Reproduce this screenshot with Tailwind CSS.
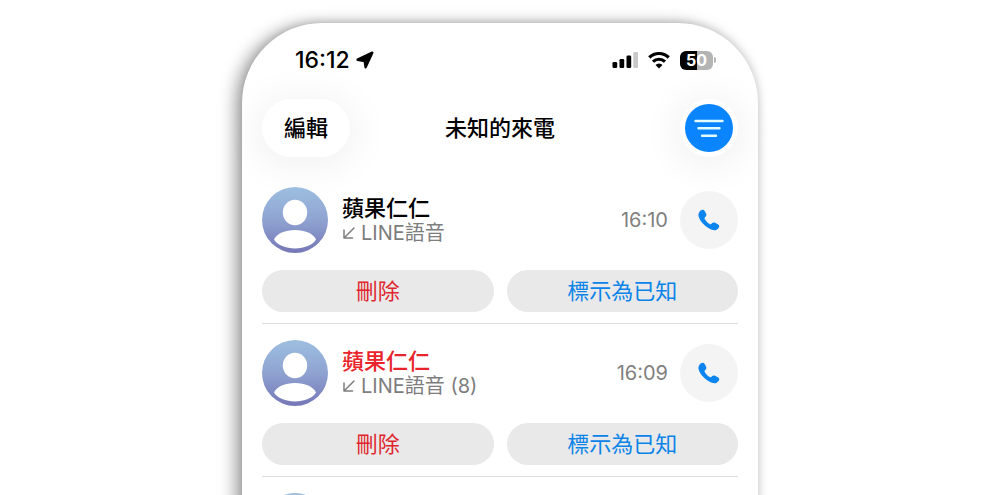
<!DOCTYPE html>
<html lang="zh-Hant">
<head>
    <meta charset="UTF-8">
    <meta name="viewport" content="width=device-width, initial-scale=1.0">
    <title>未知的來電</title>
    <script src="https://cdn.jsdelivr.net/npm/@tailwindcss/browser@4"></script>
</head>
<body class="bg-white h-screen overflow-hidden font-['Inter','Noto_Sans_CJK_TC',sans-serif] antialiased">
    <!-- Shared icons -->
    <svg class="absolute w-0 h-0" aria-hidden="true">
        <defs>
            <linearGradient id="avatar-bg" x1="0" y1="0" x2="0" y2="1">
                <stop offset="0" stop-color="#9dbfe0"/>
                <stop offset="0.5" stop-color="#8fa3d1"/>
                <stop offset="1" stop-color="#7577b6"/>
            </linearGradient>
            <symbol id="icon-avatar" viewBox="0 0 66 66">
                <circle cx="33" cy="33" r="33" fill="url(#avatar-bg)"/>
                <ellipse cx="33" cy="25.5" rx="12.2" ry="12.7" fill="#fff"/>
                <path fill="#fff" d="M12 52.5C15 46.500 23 43 33 43s18 3.500 21 9.500C51 58 42 61.500 33 61.500S15 58 12 52.500Z"/>
            </symbol>
            <symbol id="icon-incoming" viewBox="0 0 14 14">
                <path d="M12 2 2 12M2 4v8h8.500" fill="none" stroke="currentColor" stroke-width="1.500" stroke-linecap="round" stroke-linejoin="round"/>
            </symbol>
            <symbol id="icon-phone" viewBox="0 0 22 22">
                <path fill="currentColor" d="M1.200 3.200C2 1.800 3.300.7 4.500.7c.9 0 1.600.5 2.200 1.300l1.300 2.600c.6 1.100.5 2-.3 2.900l-.9 1c-.4.400-.4.900-.1 1.400 1.300 2.200 3.100 4 5.200 5.200.500.300 1 .2 1.400-.2l.9-.8c.9-.8 1.800-.9 2.900-.3l2.700 1.500c.9.500 1.400 1.100 1.400 1.900 0 1.300-1.200 2.700-2.600 3.500-1.300.700-2.900.700-4.700.100-3-1-5.900-3-8.300-5.500C3.200 12.800 1.600 10.300.8 7.900.2 6 .4 4.500 1.200 3.200Z"/>
            </symbol>
        </defs>
    </svg>

    <div class="pt-[23px] pl-px">
        <main class="w-full max-w-[516px] mx-auto min-h-screen rounded-t-[80px] bg-white px-5 shadow-[-7px_1px_16px_0px_rgba(0,0,0,0.36),1px_-1px_8px_0_rgba(0,0,0,0.12)]">

            <!-- Status Bar -->
            <div class="flex items-center justify-between pt-[23px] pl-[33px] pr-[22px]">
                <div class="flex items-center gap-1.5">
                    <span class="text-[23px] leading-7 font-medium">16:12</span>
                    <svg class="w-[18px] h-[18px]" viewBox="0 0 18 18"><path d="M16.300 1.700 9.600 16.300 8.700 10 1.600 8.700Z" fill="#000" stroke="#000" stroke-width="2.400" stroke-linejoin="round"/></svg>
                </div>
                <div class="flex items-center gap-2.5">
                    <svg class="w-[26px] h-[18px]" viewBox="0 0 26 18">
                        <rect x="0.500" y="11" width="4.700" height="6" rx="1.300"/>
                        <rect x="7.500" y="8" width="4.700" height="9" rx="1.300"/>
                        <rect x="14.500" y="4.500" width="4.700" height="12.500" rx="1.300"/>
                        <rect x="21.300" y="1" width="4.700" height="16" rx="1.300" fill="#c8c8c8"/>
                    </svg>
                    <svg class="w-[22px] h-[18px]" viewBox="0 0 22 18" fill="none" stroke="#000" stroke-width="3.200">
                        <path d="M1.300 6.500a13.800 13.800 0 0 1 19.400 0"/>
                        <path d="M5 10.700a8.600 8.600 0 0 1 12 0"/>
                        <path d="M11 17.500 7.500 14a4.800 4.800 0 0 1 7 0Z" fill="#000" stroke="none"/>
                    </svg>
                    <div class="flex items-center gap-px">
                        <div class="relative w-[33px] h-[19px] rounded-md overflow-hidden bg-linear-to-r from-black from-50% to-[#b4b4b4] to-50%">
                            <span class="absolute inset-0 text-center text-[16px] leading-[19px] font-['Inter'] font-bold text-white">50</span>
                        </div>
                        <div class="w-[2px] h-[6px] rounded-r-full bg-[#b4b4b4]"></div>
                    </div>
                </div>
            </div>

            <!-- Header -->
            <header class="grid grid-cols-[1fr_auto_1fr] items-center pt-[25px]">
                <button class="justify-self-start w-[88px] h-[58px] rounded-full bg-white text-[22px] font-medium shadow-[0_4px_36px_8px_rgba(0,0,0,0.05)]">編輯</button>
                <h1 class="text-[22px] leading-8 font-medium">未知的來電</h1>
                <button aria-label="篩選" class="justify-self-end w-[58px] h-[58px] rounded-full bg-white flex items-center justify-center shadow-[0_4px_36px_8px_rgba(0,0,0,0.05)]">
                    <svg class="w-12 h-12" viewBox="0 0 48 48">
                        <circle cx="24" cy="24" r="24" fill="#0a84ff"/>
                        <path d="M10.500 17h27M13.500 24.300h21M17 31.700h14" stroke="#e3fcff" stroke-width="2.400" stroke-linecap="round"/>
                    </svg>
                </button>
            </header>

            <!-- Call List -->
            <ul class="pt-[30px]">
                <li class="border-b border-[#dedede] pb-[11px] mb-4">
                    <div class="flex items-center">
                        <svg class="w-[66px] h-[66px]"><use href="#icon-avatar"/></svg>
                        <div class="flex-1 pl-3.5 pt-[2px]">
                            <p class="text-[22px] leading-6 font-medium">蘋果仁仁</p>
                            <p class="flex items-center gap-[5px] text-[20px] leading-[26px] text-[#7d7d7d]">
                                <svg class="w-[14px] h-[14px]"><use href="#icon-incoming"/></svg>
                                LINE語音
                            </p>
                        </div>
                        <time class="text-[20px] text-[#808080] pr-3">16:10</time>
                        <button aria-label="撥打" class="w-[58px] h-[58px] rounded-full bg-[#f4f4f4] text-[#0a84ee] flex items-center justify-center">
                            <svg class="w-[22px] h-[22px]"><use href="#icon-phone"/></svg>
                        </button>
                    </div>
                    <div class="grid grid-cols-2 gap-[13px] pt-[17px]">
                        <button class="h-[42px] rounded-full bg-[#e9e9e9] text-[22px] text-[#e0262c]">刪除</button>
                        <button class="h-[42px] rounded-full bg-[#e9e9e9] text-[22px] text-[#0a84e8]">標示為已知</button>
                    </div>
                </li>
                <li class="border-b border-[#dedede] pb-[11px] mb-4">
                    <div class="flex items-center">
                        <svg class="w-[66px] h-[66px]"><use href="#icon-avatar"/></svg>
                        <div class="flex-1 pl-3.5 pt-[2px]">
                            <p class="text-[22px] leading-6 font-medium text-[#e9242b]">蘋果仁仁</p>
                            <p class="flex items-center gap-[5px] text-[20px] leading-[26px] text-[#7d7d7d]">
                                <svg class="w-[14px] h-[14px]"><use href="#icon-incoming"/></svg>
                                LINE語音 (8)
                            </p>
                        </div>
                        <time class="text-[20px] text-[#808080] pr-3">16:09</time>
                        <button aria-label="撥打" class="w-[58px] h-[58px] rounded-full bg-[#f4f4f4] text-[#0a84ee] flex items-center justify-center">
                            <svg class="w-[22px] h-[22px]"><use href="#icon-phone"/></svg>
                        </button>
                    </div>
                    <div class="grid grid-cols-2 gap-[13px] pt-[17px]">
                        <button class="h-[42px] rounded-full bg-[#e9e9e9] text-[22px] text-[#e0262c]">刪除</button>
                        <button class="h-[42px] rounded-full bg-[#e9e9e9] text-[22px] text-[#0a84e8]">標示為已知</button>
                    </div>
                </li>
                <li>
                    <svg class="w-[66px] h-[66px]"><use href="#icon-avatar"/></svg>
                </li>
            </ul>
        </main>
    </div>
</body>
</html>
